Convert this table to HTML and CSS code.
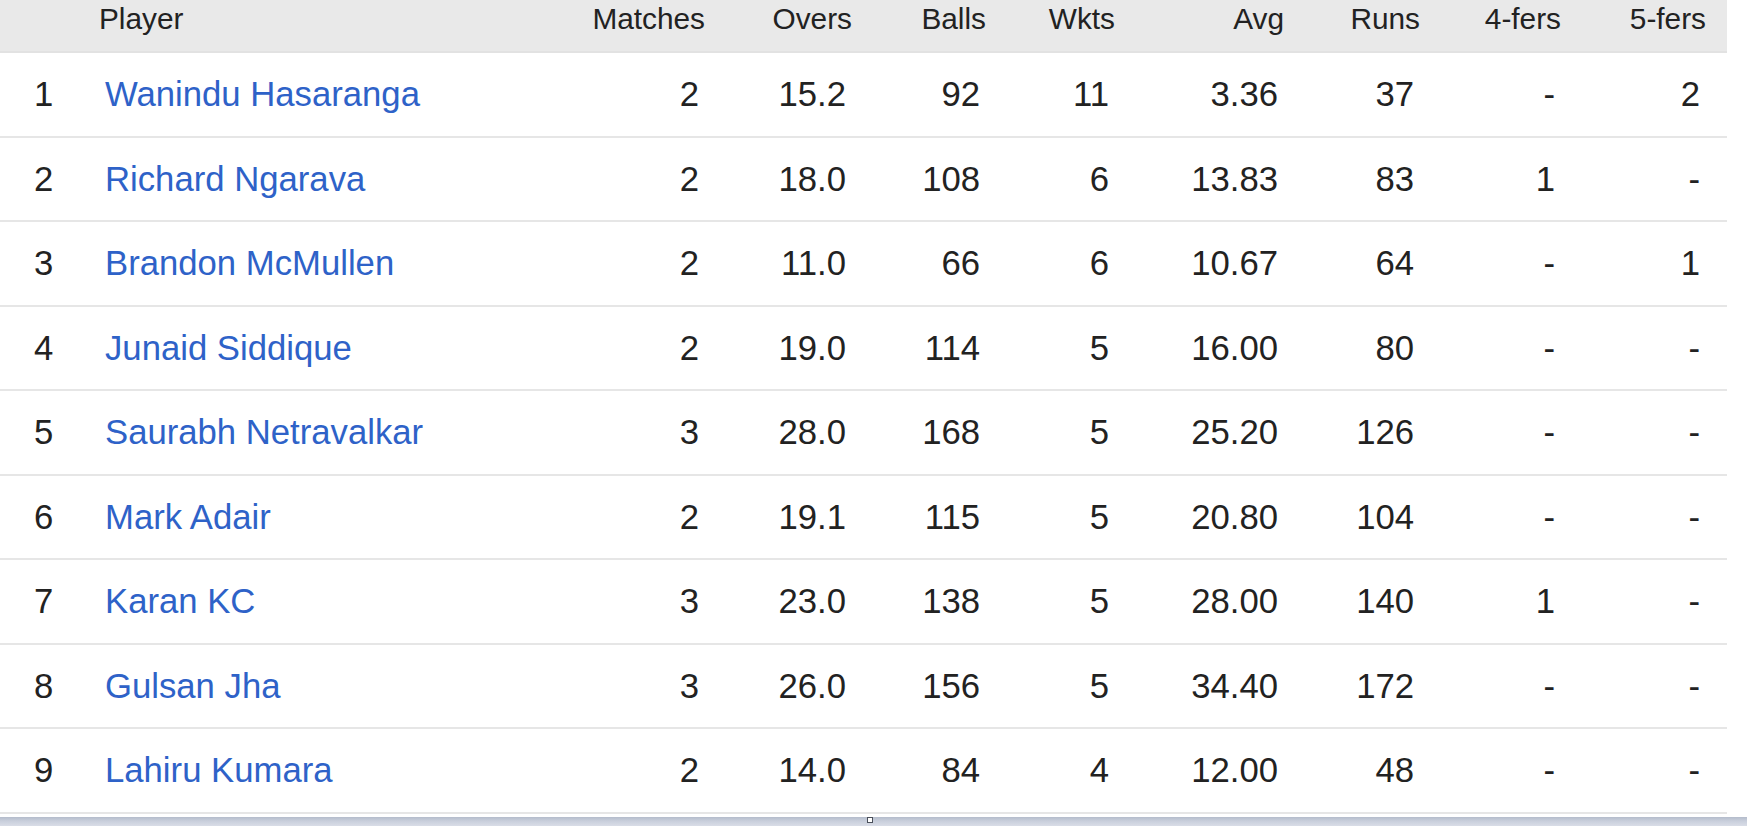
FILE: index.html
```html
<!DOCTYPE html>
<html lang="en">
<head>
<meta charset="utf-8">
<title>Bowling stats</title>
<link rel="stylesheet" href="styles.css">
</head>
<body>
<div class="stats">
  <div class="row head">
    <div class="cell rank"></div>
    <div class="cell name">Player</div>
    <div class="cell num">Matches</div>
    <div class="cell num">Overs</div>
    <div class="cell num">Balls</div>
    <div class="cell num">Wkts</div>
    <div class="cell num">Avg</div>
    <div class="cell num">Runs</div>
    <div class="cell num">4-fers</div>
    <div class="cell num">5-fers</div>
  </div>
  <div class="row"><div class="cell rank">1</div><div class="cell name"><a href="#">Wanindu Hasaranga</a></div><div class="cell num">2</div><div class="cell num">15.2</div><div class="cell num">92</div><div class="cell num">11</div><div class="cell num">3.36</div><div class="cell num">37</div><div class="cell num">-</div><div class="cell num">2</div></div>
  <div class="row"><div class="cell rank">2</div><div class="cell name"><a href="#">Richard Ngarava</a></div><div class="cell num">2</div><div class="cell num">18.0</div><div class="cell num">108</div><div class="cell num">6</div><div class="cell num">13.83</div><div class="cell num">83</div><div class="cell num">1</div><div class="cell num">-</div></div>
  <div class="row"><div class="cell rank">3</div><div class="cell name"><a href="#">Brandon McMullen</a></div><div class="cell num">2</div><div class="cell num">11.0</div><div class="cell num">66</div><div class="cell num">6</div><div class="cell num">10.67</div><div class="cell num">64</div><div class="cell num">-</div><div class="cell num">1</div></div>
  <div class="row"><div class="cell rank">4</div><div class="cell name"><a href="#">Junaid Siddique</a></div><div class="cell num">2</div><div class="cell num">19.0</div><div class="cell num">114</div><div class="cell num">5</div><div class="cell num">16.00</div><div class="cell num">80</div><div class="cell num">-</div><div class="cell num">-</div></div>
  <div class="row"><div class="cell rank">5</div><div class="cell name"><a href="#">Saurabh Netravalkar</a></div><div class="cell num">3</div><div class="cell num">28.0</div><div class="cell num">168</div><div class="cell num">5</div><div class="cell num">25.20</div><div class="cell num">126</div><div class="cell num">-</div><div class="cell num">-</div></div>
  <div class="row"><div class="cell rank">6</div><div class="cell name"><a href="#">Mark Adair</a></div><div class="cell num">2</div><div class="cell num">19.1</div><div class="cell num">115</div><div class="cell num">5</div><div class="cell num">20.80</div><div class="cell num">104</div><div class="cell num">-</div><div class="cell num">-</div></div>
  <div class="row"><div class="cell rank">7</div><div class="cell name"><a href="#">Karan KC</a></div><div class="cell num">3</div><div class="cell num">23.0</div><div class="cell num">138</div><div class="cell num">5</div><div class="cell num">28.00</div><div class="cell num">140</div><div class="cell num">1</div><div class="cell num">-</div></div>
  <div class="row"><div class="cell rank">8</div><div class="cell name"><a href="#">Gulsan Jha</a></div><div class="cell num">3</div><div class="cell num">26.0</div><div class="cell num">156</div><div class="cell num">5</div><div class="cell num">34.40</div><div class="cell num">172</div><div class="cell num">-</div><div class="cell num">-</div></div>
  <div class="row"><div class="cell rank">9</div><div class="cell name"><a href="#">Lahiru Kumara</a></div><div class="cell num">2</div><div class="cell num">14.0</div><div class="cell num">84</div><div class="cell num">4</div><div class="cell num">12.00</div><div class="cell num">48</div><div class="cell num">-</div><div class="cell num">-</div></div>
</div>
<div class="hscroll"><span class="grip"></span></div>
</body>
</html>
```
FILE: styles.css
```css
html, body {
  margin: 0;
  padding: 0;
  background: #ffffff;
}

body {
  font-family: "Liberation Sans", Arial, sans-serif;
  color: #222222;
  width: 1747px;
  height: 826px;
  overflow: hidden;
}

.stats {
  width: 1727px;
}

.row {
  display: grid;
  grid-template-columns: 93px 467px 151px 147px 134px 129px 169px 136px 141px 145px;
  padding-right: 15px;
  height: 82.5px;
  align-items: center;
  border-bottom: 2px solid #e6e6e6;
  font-size: 34.7px;
  line-height: 1.15;
}

.row.head {
  height: 51px;
  align-items: start;
  background: #e9e9e9;
  border-bottom: 2px solid #e2e2e2;
  font-size: 29.8px;
}

.cell {
  padding: 2px 12px 0;
  white-space: nowrap;
}

.head .cell {
  padding: 2px 6px 0;
}

.cell.rank {
  padding-left: 34px;
}

.cell.num {
  text-align: right;
}

.cell.name a {
  color: #2e62c8;
  text-decoration: none;
}

.hscroll {
  margin-top: 3.5px;
  height: 9px;
  width: 1747px;
  display: flex;
  align-items: flex-start;
  padding-left: 867px;
  box-sizing: border-box;
  background: linear-gradient(to bottom, #b4bccb 0%, #c9cfdc 45%, #d9dde7 100%);
}

.grip {
  width: 4px;
  height: 4px;
  border: 1px solid #4a4f5a;
  background: #ffffff;
}
```
